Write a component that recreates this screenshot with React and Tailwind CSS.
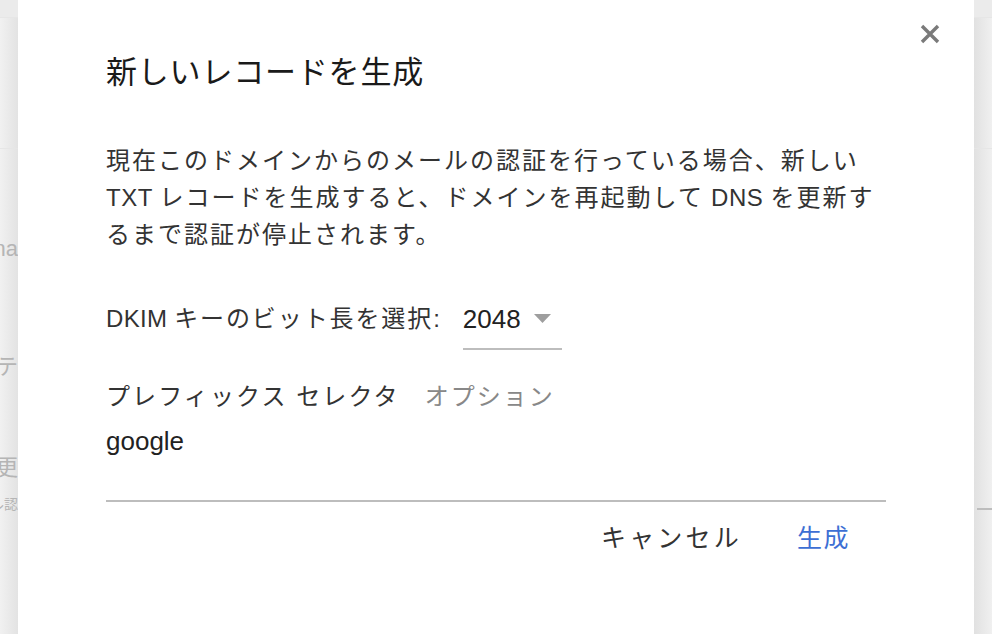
const font = { fontFamily: '"Liberation Sans", "Noto Sans CJK JP", sans-serif' };

function BackLeft() {
  return (
    <div className="w-[18px] shrink-0 overflow-hidden bg-gradient-to-r from-[#f1f1f1] to-[#e3e3e3] text-[#b5b5b5] flex flex-col">
      <div className="h-[18px] border-b border-[#e6e6e6] bg-[#ebebeb]" />
      <div className="h-[131px] border-b border-[#e6e6e6]" />
      <div className="h-[83px]" />
      <div className="flex justify-end whitespace-nowrap text-[22px] leading-[34px]">na</div>
      <div className="h-[86px]" />
      <div className="flex justify-end whitespace-nowrap text-[22px] leading-[30px]">テ</div>
      <div className="h-[71px]" />
      <div className="flex justify-end whitespace-nowrap text-[22px] leading-[30px]">更</div>
      <div className="mt-[6px] flex justify-end whitespace-nowrap text-[14px] leading-[30px]">ル認</div>
    </div>
  );
}

function BackRight() {
  return (
    <div className="w-[18px] shrink-0 overflow-hidden bg-gradient-to-r from-[#e1e1e1] to-[#f0f0f0] flex flex-col">
      <div className="h-[18px] border-b border-[#e6e6e6] bg-[#ebebeb]" />
      <div className="h-[131px] border-b border-[#e6e6e6]" />
      <div className="h-[359px]" />
      <div className="ml-[3px] h-[2px] bg-[#bdbdbd]" />
    </div>
  );
}

export default function App() {
  return (
    <div className="flex h-[634px] w-[992px] overflow-hidden bg-[#eeeeee]" style={font}>
      <BackLeft />

      {/* DIALOG */}
      <div className="flex-1 bg-white flex flex-col pl-[88px] pr-[88px] pt-[51px] relative">
        <button className="absolute right-[32px] top-[22px] text-[#7a7a7a]">
          <svg width="24" height="24" viewBox="0 0 24 24">
            <path d="M4 4 L20 20 M20 4 L4 20" stroke="currentColor" strokeWidth="3.4" />
          </svg>
        </button>

        <h2 className="text-[31px] leading-[44px] text-[#1a1a1a] tracking-[0.8px]">新しいレコードを生成</h2>

        <p className="mt-[47px] text-[24px] leading-[37px] text-[#333] tracking-[2px]">
          現在このドメインからのメールの認証を行っている場合、新しい
          <br />
          <span className="tracking-[0.5px]">TXT </span>レコードを生成すると、ドメインを再起動して<span className="tracking-[0.5px]"> DNS </span>を更新す
          <br />
          るまで認証が停止されます。
        </p>

        <div className="mt-[46px] flex items-start text-[24px] text-[#333]">
          <span className="leading-[36px] pt-[2px] tracking-[1.9px]">
            <span className="tracking-[0.3px]">DKIM </span>キーのビット長を選択:
          </span>
          <div className="ml-[21px] w-[99px] border-b-2 border-[#bdbdbd] h-[51px] flex items-start">
            <span className="leading-[36px] pt-[2px] text-[26px] text-[#222]">2048</span>
            <svg className="ml-[13px] mt-[15px]" width="17" height="9" viewBox="0 0 17 9">
              <path d="M0 0 L17 0 L8.5 9 Z" fill="#9e9e9e" />
            </svg>
          </div>
        </div>

        <div className="mt-[29px] flex text-[24px] leading-[36px]">
          <span className="text-[#333] tracking-[2.1px]">プレフィックス セレクタ</span>
          <span className="ml-[25px] text-[#888] tracking-[2px]">オプション</span>
        </div>
        <div className="mt-[8px] h-[79px] border-b-2 border-[#bdbdbd] text-[26px] leading-[36px] text-[#222]">
          google
        </div>

        <div className="mt-[16px] flex justify-end items-center gap-[55px] text-[25px] leading-[40px] pr-[36px]">
          <button className="text-[#333] tracking-[3.2px]">キャンセル</button>
          <button className="text-[#3d6fd4] tracking-[1.5px]">生成</button>
        </div>
      </div>

      <BackRight />
    </div>
  );
}
